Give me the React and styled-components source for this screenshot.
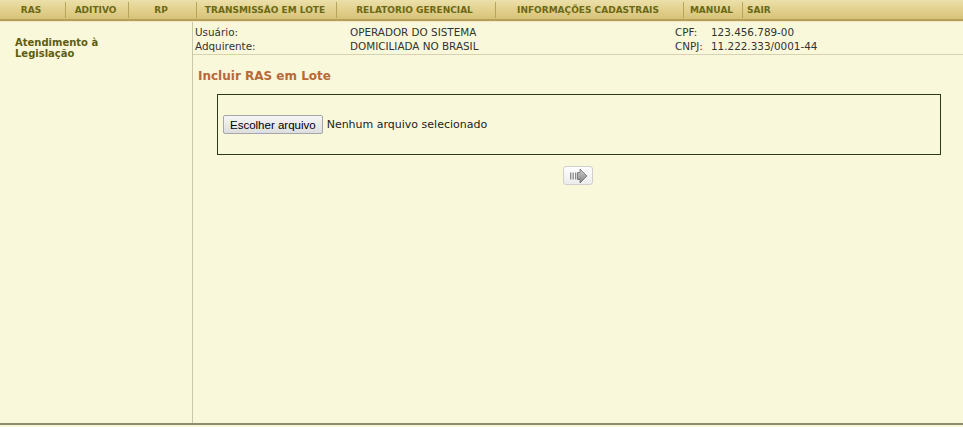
import React from 'react';
import styled, { createGlobalStyle } from 'styled-components';

const GlobalStyle = createGlobalStyle`
  html, body {
    margin: 0;
    padding: 0;
    background: #faf8db;
  }
  body {
    font-family: "DejaVu Sans", Verdana, sans-serif;
  }
`

const Page = styled.div`
  width: 963px;
  height: 427px;
  display: flex;
  flex-direction: column;
  background: #faf8db;
`

const Menu = styled.div`
  height: 19px;
  display: flex;
  align-items: stretch;
  background: linear-gradient(to bottom, #ece0aa 0%, #e2d18e 50%, #d7c279 100%);
  border-bottom: 2px solid #b59f5b;
  box-shadow: 0 1px 0 #f1e9c4;
`

const MenuItem = styled.div`
  width: ${props => props.w ? props.w + 'px' : 'auto'};
  flex: ${props => props.w ? 'none' : '1'};
  display: flex;
  align-items: center;
  justify-content: ${props => props.left ? 'flex-start' : 'center'};
  padding: ${props => props.left ? '0 0 0 4px' : '0 3px 0 0'};
  box-sizing: border-box;
  font-size: 9px;
  font-weight: bold;
  color: #6b6915;
  border-right: ${props => props.last ? 'none' : '1px solid #b8a35c'};
  margin: 2px 0 1px;
  white-space: nowrap;
`

const Main = styled.div`
  flex: 1;
  display: flex;
  margin-top: 1px;
  border-bottom: 2px solid #8d8b6b;
  margin-bottom: 2px;
`

const Sidebar = styled.div`
  width: 193px;
  flex: none;
  border-right: 1px solid #cbc7aa;
  padding: 15px 0 0 15px;
  box-sizing: border-box;
  font-size: 10px;
  font-weight: bold;
  line-height: 11px;
  color: #5e5d12;
`

const Content = styled.div`
  flex: 1;
  display: flex;
  flex-direction: column;
`

const Info = styled.div`
  display: grid;
  grid-template-columns: 155px 325px 36px 1fr;
  grid-auto-rows: 14px;
  padding: 3px 0 1px 2px;
  font-size: 10.4px;
  color: #333;
  border-bottom: 1px solid #d5d1b2;
  align-items: center;
`

const Title = styled.h1`
  margin: 14px 0 10px 5px;
  font-size: 12px;
  font-weight: bold;
  color: #b6693b;
  line-height: 15px;
`

const UploadBox = styled.div`
  margin: 0 22px 0 24px;
  border: 1px solid #2f3b17;
  padding: 20px 5px 20px 5px;
  display: flex;
  align-items: center;
  gap: 4px;
`

const FileButton = styled.button`
  height: 19px;
  padding: 0 6px;
  font-family: "Liberation Sans", Arial, sans-serif;
  font-size: 11.5px;
  color: #000;
  background: linear-gradient(to bottom, #f6f6f6, #dedede);
  border: 1px solid #a7a7a7;
  border-radius: 2px;
`

const FileLabel = styled.span`
  font-size: 11px;
  color: #222;
`

const Actions = styled.div`
  display: flex;
  justify-content: center;
  margin-top: 11px;
`

const ArrowButton = styled.button`
  width: 30px;
  height: 19px;
  padding: 0;
  display: flex;
  align-items: center;
  justify-content: center;
  background: linear-gradient(to bottom, #ffffff, #ececec);
  border: 1px solid #cfcfcf;
  border-radius: 3px;
`

const menu = [
  { label: 'RAS', w: 66 },
  { label: 'ADITIVO', w: 63 },
  { label: 'RP', w: 68 },
  { label: 'TRANSMISSÃO EM LOTE', w: 140 },
  { label: 'RELATORIO GERENCIAL', w: 159 },
  { label: 'INFORMAÇÕES CADASTRAIS', w: 188 },
  { label: 'MANUAL', w: 59 },
];

const App = () => {
  return (
    <Page>
      <GlobalStyle />
      <Menu>
        {menu.map((m) => <MenuItem key={m.label} w={m.w}>{m.label}</MenuItem>)}
        <MenuItem left last>SAIR</MenuItem>
      </Menu>
      <Main>
        <Sidebar>
          Atendimento à<br />Legislação
        </Sidebar>
        <Content>
          <Info>
            <span>Usuário:</span>
            <span>OPERADOR DO SISTEMA</span>
            <span>CPF:</span>
            <span>123.456.789-00</span>
            <span>Adquirente:</span>
            <span>DOMICILIADA NO BRASIL</span>
            <span>CNPJ:</span>
            <span>11.222.333/0001-44</span>
          </Info>
          <Title>Incluir RAS em Lote</Title>
          <UploadBox>
            <FileButton>Escolher arquivo</FileButton>
            <FileLabel>Nenhum arquivo selecionado</FileLabel>
          </UploadBox>
          <Actions>
            <ArrowButton>
              <svg width="22" height="16" viewBox="0 0 22 16">
                <defs>
                  <linearGradient id="ag" x1="0" y1="0" x2="0" y2="1">
                    <stop offset="0" stopColor="#d0d0d0" />
                    <stop offset="1" stopColor="#808080" />
                  </linearGradient>
                </defs>
                <rect x="3" y="4.5" width="1.3" height="7" fill="#8a8a8a" />
                <rect x="5.5" y="4.5" width="1.3" height="7" fill="#8a8a8a" />
                <rect x="8" y="4.5" width="1.3" height="7" fill="#8a8a8a" />
                <path d="M10.5 4.5 H13 V1 L20 8 L13 15 V11.5 H10.5 Z" fill="url(#ag)" stroke="#6f6f6f" strokeWidth="0.8" />
              </svg>
            </ArrowButton>
          </Actions>
        </Content>
      </Main>
    </Page>
  );
};

export default App;
